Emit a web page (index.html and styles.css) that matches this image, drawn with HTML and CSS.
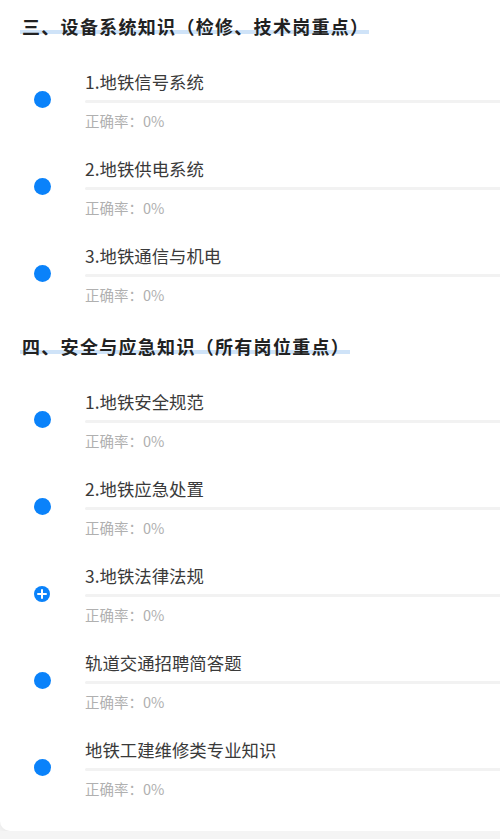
FILE: index.html
```html
<!DOCTYPE html>
<html>
<head>
  <title>知识点练习</title>
  <link rel="stylesheet" href="styles.css">
</head>
<body>
  <div class="card">
    <div class="section">
      <h2 class="sec-title"><span>三、设备系统知识（检修、技术岗重点）</span></h2>
      <div class="items">
        <div class="item">
          <div class="mark"><span class="dot"></span></div>
          <div class="info">
            <div class="name">1.地铁信号系统</div>
            <div class="bar"></div>
            <div class="rate">正确率：0%</div>
          </div>
        </div>
        <div class="item">
          <div class="mark"><span class="dot"></span></div>
          <div class="info">
            <div class="name">2.地铁供电系统</div>
            <div class="bar"></div>
            <div class="rate">正确率：0%</div>
          </div>
        </div>
        <div class="item">
          <div class="mark"><span class="dot"></span></div>
          <div class="info">
            <div class="name">3.地铁通信与机电</div>
            <div class="bar"></div>
            <div class="rate">正确率：0%</div>
          </div>
        </div>
      </div>
    </div>

    <div class="section">
      <h2 class="sec-title"><span>四、安全与应急知识（所有岗位重点）</span></h2>
      <div class="items">
        <div class="item">
          <div class="mark"><span class="dot"></span></div>
          <div class="info">
            <div class="name">1.地铁安全规范</div>
            <div class="bar"></div>
            <div class="rate">正确率：0%</div>
          </div>
        </div>
        <div class="item">
          <div class="mark"><span class="dot"></span></div>
          <div class="info">
            <div class="name">2.地铁应急处置</div>
            <div class="bar"></div>
            <div class="rate">正确率：0%</div>
          </div>
        </div>
        <div class="item">
          <div class="mark">
            <svg class="plus" viewBox="0 0 16 16" width="16" height="16">
              <circle cx="8" cy="8" r="8" fill="#0a82fa"/>
              <path d="M8 4v8M4 8h8" stroke="#fff" stroke-width="2" stroke-linecap="round"/>
            </svg>
          </div>
          <div class="info">
            <div class="name">3.地铁法律法规</div>
            <div class="bar"></div>
            <div class="rate">正确率：0%</div>
          </div>
        </div>
        <div class="item">
          <div class="mark"><span class="dot"></span></div>
          <div class="info">
            <div class="name">轨道交通招聘简答题</div>
            <div class="bar"></div>
            <div class="rate">正确率：0%</div>
          </div>
        </div>
        <div class="item">
          <div class="mark"><span class="dot"></span></div>
          <div class="info">
            <div class="name">地铁工建维修类专业知识</div>
            <div class="bar"></div>
            <div class="rate">正确率：0%</div>
          </div>
        </div>
      </div>
    </div>
  </div>
</body>
</html>
```

FILE: styles.css
```css
html, body {
  overflow-x: hidden;
}
body {
  margin: 0;
  background: #f4f4f4;
  font-family: "Noto Sans CJK SC", "Noto Sans", sans-serif;
  color: #333;
}
.card {
  background: #fff;
  margin-right: -16px;
  padding: 14px 0 3px;
  border-radius: 0 0 10px 10px;
  box-shadow: 0 2px 6px rgba(0,0,0,0.05);
}
.section {
  margin-bottom: 3px;
}
.sec-title {
  margin: 0;
  padding-left: 20px;
  font-size: 18px;
  line-height: 24px;
  font-weight: bold;
  color: #222;
}
.sec-title span {
  display: inline-block;
  padding: 0 0 0 2px;
  letter-spacing: 1.3px;
  background: linear-gradient(#cfe3f8, #cfe3f8) no-repeat left 16px / 100% 4px;
  border-radius: 2px;
}
.items {
  margin-top: 32px;
}
.item {
  display: flex;
  height: 87px;
}
.mark {
  width: 85px;
  flex: none;
  display: flex;
  justify-content: center;
  align-items: flex-start;
  padding-top: 21px;
  box-sizing: border-box;
}
.dot {
  width: 17px;
  height: 17px;
  border-radius: 50%;
  background: #0a82fa;
}
.plus {
  flex: none;
  margin-top: 1px;
  margin-left: -1px;
}
.info {
  flex: 1;
}
.name {
  font-size: 17.4px;
  line-height: 24px;
  color: #3a3a3a;
}
.bar {
  margin-top: 6px;
  height: 3px;
  border-radius: 2px;
  background: #f2f2f2;
}
.rate {
  margin-top: 8px;
  font-size: 14.5px;
  line-height: 20px;
  color: #b0b0b0;
}
```
